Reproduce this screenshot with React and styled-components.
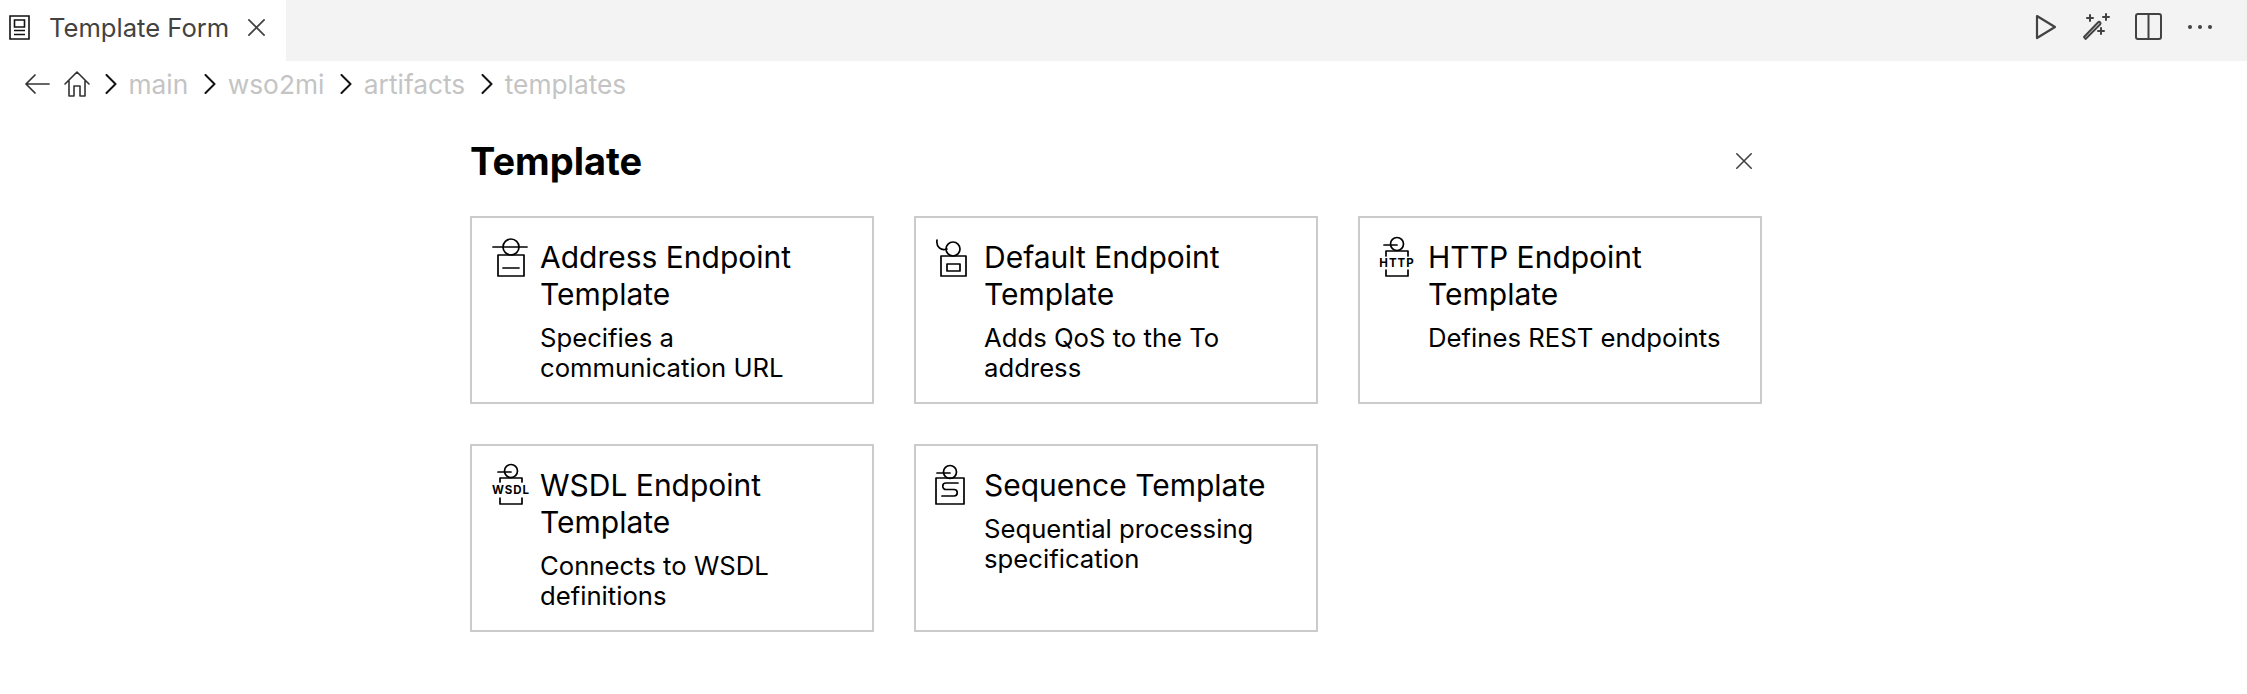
import React from 'react';
import styled, { createGlobalStyle } from 'styled-components';

const GlobalStyle = createGlobalStyle`
  html, body {
    margin: 0;
    padding: 0;
    background: #fff;
    font-family: 'Inter', 'Liberation Sans', sans-serif;
  }
`;

const TabBar = styled.div`
  display: flex;
  justify-content: space-between;
  height: 61px;
  background: #f3f3f3;
`;

const Tab = styled.div`
  display: flex;
  align-items: center;
  width: 286px;
  height: 61px;
  padding-left: 9px;
  padding-bottom: 7px;
  box-sizing: border-box;
  background: #fff;
  color: #424242;
  font-size: 25.6px;
`;

const TabLabel = styled.span`
  margin-left: 19px;
  margin-right: 18px;
  white-space: nowrap;
`;

const Actions = styled.div`
  display: flex;
  align-items: center;
  gap: 25px;
  padding-right: 34px;
  height: 53px;
  color: #424242;
`;

const Crumbs = styled.div`
  display: flex;
  align-items: center;
  height: 46px;
  padding-left: 24px;
  color: #111;
`;

const CrumbIcon = styled.svg`
  flex: none;
  margin-left: ${(p) => p.$gap || 0}px;
`;

const CrumbText = styled.span`
  margin-left: 11.5px;
  margin-right: 16px;
  color: #c4c4c4;
  font-size: 26.3px;
  white-space: nowrap;
`;

const Panel = styled.main`
  width: 1292px;
  margin-left: 470px;
`;

const PanelHead = styled.div`
  display: flex;
  align-items: center;
  justify-content: space-between;
  height: 76px;
  margin-top: 16px;
  margin-bottom: 17px;
  padding-right: 9px;
  color: #424242;
`;

const Title = styled.h1`
  margin: 0;
  font-size: 38px;
  font-weight: 700;
  color: #000;
`;

const Grid = styled.div`
  display: grid;
  grid-template-columns: repeat(3, 404px);
  grid-auto-rows: 188px;
  gap: 40px;
`;

const Card = styled.div`
  display: flex;
  gap: 10px;
  box-sizing: border-box;
  padding: 18px 18px 0;
  border: 2px solid #cbcbcb;
  background: #fff;
`;

const CardIcon = styled.svg`
  flex: none;
  width: 40px;
  height: 40px;
  overflow: visible;
`;

const CardBody = styled.div`
  min-width: 0;
  padding-top: 3px;
`;

const CardTitle = styled.div`
  font-size: 30px;
  line-height: 37px;
  color: #000;
`;

const CardText = styled.div`
  margin-top: 10px;
  font-size: 25.7px;
  line-height: 30px;
  color: #000;
`;

const IconLabel = styled.text`
  font-family: 'Inter', 'Liberation Sans', sans-serif;
  font-size: 11.5px;
  font-weight: 700;
  letter-spacing: 1px;
  fill: #000;
  stroke: none;
`;

const strokeProps = { fill: 'none', stroke: 'currentColor', strokeLinecap: 'round', strokeLinejoin: 'round' };

function CloseIcon({ size = 20, width = 2 }) {
  return (
    <svg width={size} height={size} viewBox="0 0 20 20" {...strokeProps} strokeWidth={width} style={{ flex: 'none' }}>
      <path d="M2 2 18 18M18 2 2 18" />
    </svg>
  );
}

function Chevron({ gap }) {
  return (
    <CrumbIcon $gap={gap} width="12" height="20" viewBox="0 0 12 20" {...strokeProps} strokeWidth="2">
      <path d="M1.5 1 10.5 10 1.5 19" />
    </CrumbIcon>
  );
}

const icons = {
  address: (
    <>
      <circle cx="21" cy="11" r="8" />
      <path d="M3 11H37M8 19H34V40H8ZM13 32H29" />
    </>
  ),
  default: (
    <>
      <circle cx="19" cy="13" r="7" />
      <path d="M13 13C7 15 2 11 3 4M7 20H32V40H7ZM13 28H26V35H13Z" />
    </>
  ),
  http: (
    <>
      <circle cx="19" cy="8" r="6.5" />
      <path d="M6 9H19M8 20V15H30V20M8 34V40H30V34" />
      <IconLabel x="19" y="31" textAnchor="middle">HTTP</IconLabel>
    </>
  ),
  wsdl: (
    <>
      <circle cx="21" cy="7" r="6.5" />
      <path d="M8 8H21M10 18V14H32V18M10 34V40H32V34" />
      <IconLabel x="21" y="30" textAnchor="middle">WSDL</IconLabel>
    </>
  ),
  sequence: (
    <>
      <circle cx="16" cy="8" r="6.5" />
      <path d="M3 9H16M2 14H30V40H2ZM24 19H12A3.2 3.2 0 0 0 12 25.5H20A3.2 3.2 0 0 1 20 32H8" />
    </>
  ),
};

const templates = [
  { id: 'address', title: 'Address Endpoint Template', text: 'Specifies a communication URL' },
  { id: 'default', title: 'Default Endpoint Template', text: 'Adds QoS to the To address' },
  { id: 'http', title: 'HTTP Endpoint Template', text: 'Defines REST endpoints' },
  { id: 'wsdl', title: 'WSDL Endpoint Template', text: 'Connects to WSDL definitions' },
  { id: 'sequence', title: 'Sequence Template', text: 'Sequential processing specification' },
];

export default function App() {
  return (
    <>
      <GlobalStyle />
      <TabBar>
        <Tab>
          <svg width="21" height="25" viewBox="0 0 21 25" fill="none" stroke="#111" strokeWidth="1.6" style={{ flex: 'none' }}>
            <path d="M1 1H20V24H1ZM5.5 5H15.5V12H5.5ZM5 15.5H16M5 19.5H16" />
          </svg>
          <TabLabel>Template Form</TabLabel>
          <CloseIcon size={19} width={1.8} />
        </Tab>
        <Actions>
          <svg width="22" height="26" viewBox="0 0 22 26" {...strokeProps} strokeWidth="2.2">
            <path d="M2 2 20 13 2 24Z" />
          </svg>
          <svg width="28" height="28" viewBox="0 0 28 28" {...strokeProps} strokeWidth="2">
            <path d="M2 24 3.5 26 18 11.5C19.5 10 17.5 8 16 9.5ZM5 5H11M8 2V8M21 4H27M24 1V7M16 18H22M19 15V21" />
          </svg>
          <svg width="27" height="27" viewBox="0 0 27 27" {...strokeProps} strokeWidth="2">
            <path d="M3 1H24Q26 1 26 3V24Q26 26 24 26H3Q1 26 1 24V3Q1 1 3 1ZM13.5 1V26" />
          </svg>
          <svg width="26" height="6" viewBox="0 0 26 6" fill="currentColor">
            <circle cx="3" cy="3" r="2" />
            <circle cx="13" cy="3" r="2" />
            <circle cx="23" cy="3" r="2" />
          </svg>
        </Actions>
      </TabBar>
      <Crumbs>
        <svg width="26" height="22" viewBox="0 0 26 22" {...strokeProps} stroke="#333" strokeWidth="1.7" style={{ flex: 'none' }}>
          <path d="M25 11H2M11 2 2 11 11 20" />
        </svg>
        <svg width="26" height="26" viewBox="0 0 26 26" {...strokeProps} stroke="#333" strokeWidth="1.6" style={{ flex: 'none', marginLeft: 14 }}>
          <path d="M1 13 13 1 25 13M5 10V25H10V15H16V25H21V10" />
        </svg>
        <Chevron gap={15} />
        <CrumbText>main</CrumbText>
        <Chevron />
        <CrumbText>wso2mi</CrumbText>
        <Chevron />
        <CrumbText>artifacts</CrumbText>
        <Chevron />
        <CrumbText>templates</CrumbText>
      </Crumbs>
      <Panel>
        <PanelHead>
          <Title>Template</Title>
          <CloseIcon size={18} width={1.8} />
        </PanelHead>
        <Grid>
          {templates.map((item) => (
            <Card key={item.id}>
              <CardIcon viewBox="0 0 40 40" {...strokeProps} strokeWidth="1.7" color="#000">
                {icons[item.id]}
              </CardIcon>
              <CardBody>
                <CardTitle>{item.title}</CardTitle>
                <CardText>{item.text}</CardText>
              </CardBody>
            </Card>
          ))}
        </Grid>
      </Panel>
    </>
  );
}
